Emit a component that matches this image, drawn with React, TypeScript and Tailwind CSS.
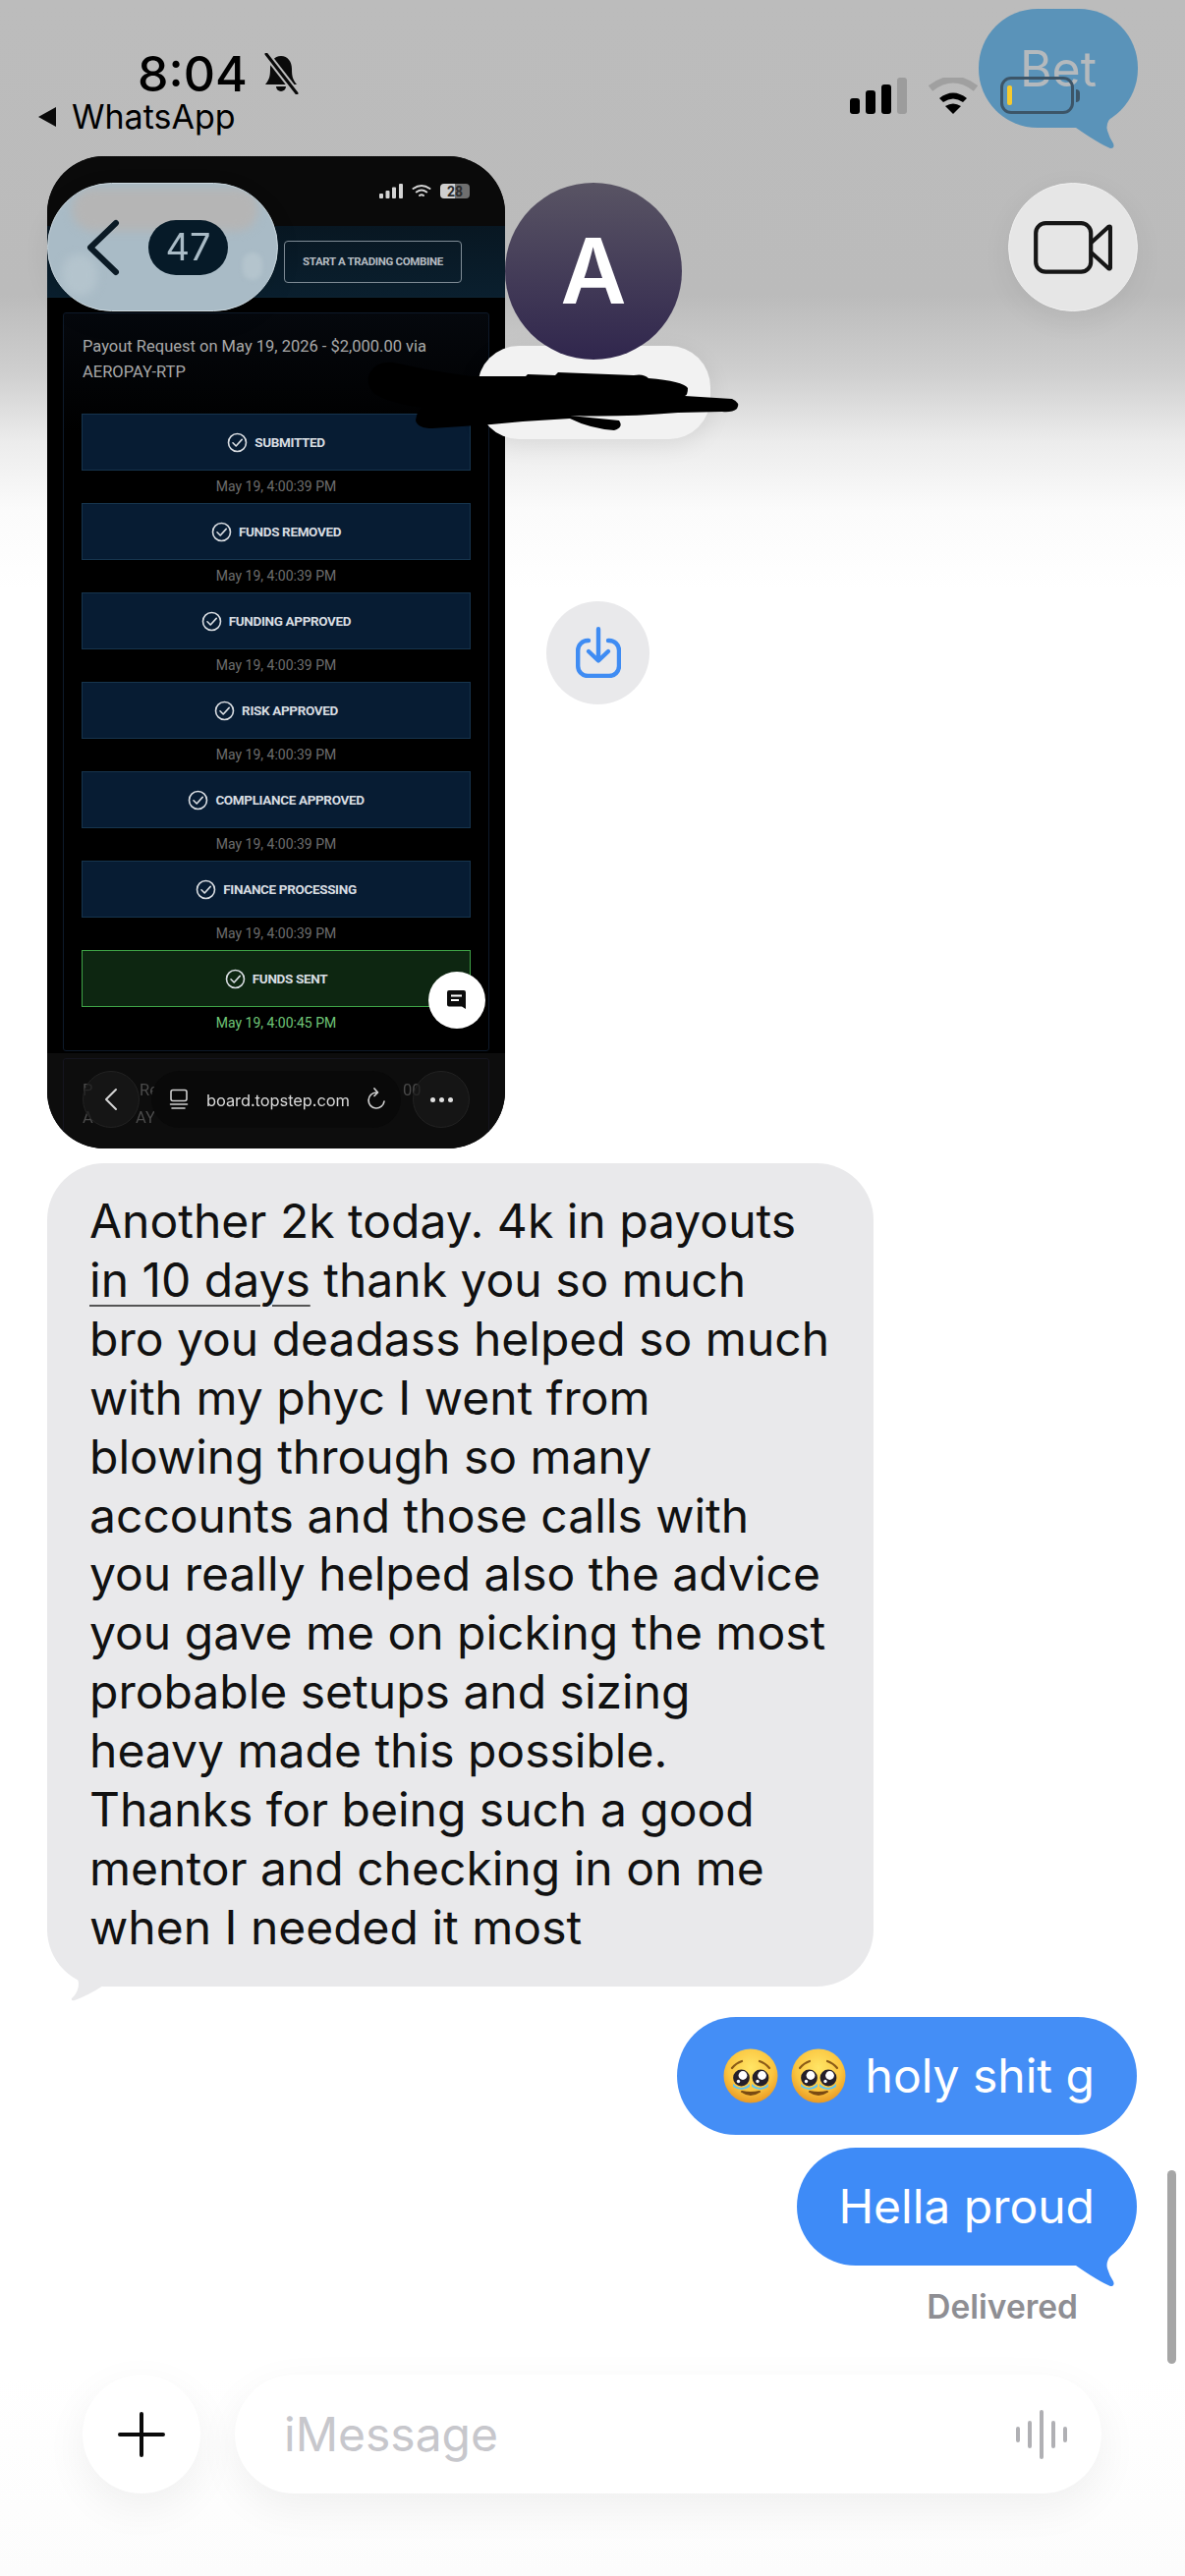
import React from "react";

const rows = [
  ["SUBMITTED", "May 19, 4:00:39 PM"],
  ["FUNDS REMOVED", "May 19, 4:00:39 PM"],
  ["FUNDING APPROVED", "May 19, 4:00:39 PM"],
  ["RISK APPROVED", "May 19, 4:00:39 PM"],
  ["COMPLIANCE APPROVED", "May 19, 4:00:39 PM"],
  ["FINANCE PROCESSING", "May 19, 4:00:39 PM"],
];

const lines = [
  "Another 2k today. 4k in payouts",
  "@in 10 days",
  "bro you deadass helped so much",
  "with my phyc I went from",
  "blowing through so many",
  "accounts and those calls with",
  "you really helped also the advice",
  "you gave me on picking the most",
  "probable setups and sizing",
  "heavy made this possible.",
  "Thanks for being such a good",
  "mentor and checking in on me",
  "when I needed it most",
];

function Check({ color = "#d9dde2" }: { color?: string }) {
  return (
    <svg width="21" height="21" viewBox="0 0 21 21" fill="none" className="shrink-0">
      <circle cx="10.5" cy="10.5" r="9" stroke={color} strokeWidth="1.6" />
      <path d="M6 10.8l3.2 3.2 6-6.6" stroke={color} strokeWidth="1.6" strokeLinecap="round" strokeLinejoin="round" />
    </svg>
  );
}

function Emoji() {
  return (
    <svg width="56" height="56" viewBox="0 0 56 56" className="shrink-0">
      <defs>
        <radialGradient id="face" cx="50%" cy="35%" r="70%">
          <stop offset="0%" stopColor="#ffe566" />
          <stop offset="60%" stopColor="#fbc53f" />
          <stop offset="100%" stopColor="#e5901f" />
        </radialGradient>
      </defs>
      <circle cx="28" cy="28" r="27.5" fill="url(#face)" />
      <path d="M9 20q4-5 10-7M47 20q-4-5-10-7" stroke="#8a5a17" strokeWidth="2.2" fill="none" strokeLinecap="round" />
      <path d="M10 36q8 8 17 0v3q-8 6-17 0zM29 36q9 8 17 0v3q-8 6-17 0z" fill="#63c4ee" />
      <circle cx="18.5" cy="30" r="8.4" fill="#241f2a" />
      <circle cx="38" cy="30" r="8.4" fill="#241f2a" />
      <circle cx="20" cy="27.5" r="4.4" fill="#fff" />
      <circle cx="39.5" cy="27.5" r="4.4" fill="#fff" />
      <circle cx="15.5" cy="33.5" r="1.7" fill="#fff" />
      <circle cx="35" cy="33.5" r="1.7" fill="#fff" />
      <path d="M19 44q9 6 18 0q-9 2-18 0z" fill="#7a4a12" stroke="#7a4a12" strokeWidth="2" strokeLinejoin="round" />
    </svg>
  );
}

export default function App() {
  return (
    <div
      className="relative h-[2622px] w-[1206px] overflow-hidden bg-[linear-gradient(to_bottom,#bcbcbc_0px,#bbbbbb_300px,#cfcfcf_380px,#ececec_450px,#fbfbfb_520px,#ffffff_600px)]"
      style={{ fontFamily: "Inter, 'Noto Sans', sans-serif" }}
    >
      {/* message column */}
      <main className="flex flex-col pl-[48px] pr-[49px] pt-[159px]">
        <div className="flex items-center">
          {/* screenshot attachment */}
          <div
            className="relative h-[1010px] w-[466px] shrink-0 overflow-hidden rounded-[58px] bg-black blur-[0.35px]"
            style={{ fontFamily: "Roboto, sans-serif" }}
          >
            <div className="flex h-[71px] items-start justify-end gap-[9px] bg-[#0a0a0a] pr-[36px] pt-[28px]">
              <svg width="24" height="15" viewBox="0 0 24 15" fill="#d4d4d4">
                <rect x="0" y="10" width="4" height="5" rx="1" />
                <rect x="6.5" y="7" width="4" height="8" rx="1" />
                <rect x="13" y="3.5" width="4" height="11.5" rx="1" />
                <rect x="20" y="0" width="4" height="15" rx="1" />
              </svg>
              <svg width="20" height="15" viewBox="0 0 20 15" fill="none" stroke="#d4d4d4" strokeWidth="2" strokeLinecap="round">
                <path d="M1.5 5q8.5-6 17 0M4.8 8.5q5.2-3.8 10.4 0M8 12q2-1.4 4 0" />
              </svg>
              <div className="flex h-[15px] w-[30px] items-center justify-center rounded-[4px] bg-[linear-gradient(to_right,#cfcfcf_50%,#6f6f6f_50%)] text-[14px] font-bold leading-none text-[#2b2b2b]">28</div>
            </div>
            <div className="flex h-[73px] justify-end border-b border-[#0e2433] bg-[linear-gradient(to_bottom,#081722,#0a1f2e)] pr-[44px] pt-[15px]">
              <div className="flex h-[43px] w-[181px] items-center justify-center rounded-[4px] border border-[#7f8c96] text-[11.5px] font-bold tracking-[-0.35px] text-[#b5bcc2]">
                START A TRADING COMBINE
              </div>
            </div>
            <div className="mx-[16px] mt-[15px] h-[752px] rounded-[3px] border border-[#0e1a2a] bg-[linear-gradient(to_bottom,#05080d,#000000_120px)]">
              <p className="px-[19px] pt-[21px] text-[16.5px] leading-[26px] text-[#a9a9a9]">
                Payout Request on May 19, 2026 - $2,000.00 via
                <br />
                AEROPAY-RTP
              </p>
              <div className="mt-[29px] flex flex-col px-[18px]">
                {rows.map(([label, time]) => (
                  <div key={label} className="flex flex-col">
                    <div className="flex h-[58px] items-center justify-center gap-[7px] border border-[#16344d] bg-[#071c33] text-[13.5px] font-bold tracking-[-0.35px] text-[#d8dde2]">
                      <Check />
                      <span>{label}</span>
                    </div>
                    <div className="flex h-[33px] items-center justify-center text-[14px] text-[#6d6d6d]">{time}</div>
                  </div>
                ))}
                <div className="flex h-[58px] items-center justify-center gap-[7px] border border-[#3fa447] bg-[#0d2611] text-[13.5px] font-bold tracking-[-0.35px] text-[#d8dde2]">
                  <Check />
                  <span>FUNDS SENT</span>
                </div>
                <div className="flex h-[33px] items-center justify-center text-[14px] text-[#6fc577]">May 19, 4:00:45 PM</div>
              </div>
            </div>

            {/* browser toolbar over the next page card */}
            <div className="absolute bottom-0 left-0 right-0 h-[97px] bg-[#0d0d0d]">
              <div className="absolute left-[16px] right-[16px] top-[5px] h-[100px] rounded-[3px] border border-[#15151f]" />
              <span className="absolute left-[36px] top-[25px] text-[16.5px] leading-[26px] text-[#4a4a4a]">P</span>
              <span className="absolute left-[94px] top-[25px] text-[16.5px] leading-[26px] text-[#4a4a4a]">Re</span>
              <span className="absolute left-[362px] top-[25px] text-[16.5px] leading-[26px] text-[#4a4a4a]">00</span>
              <span className="absolute left-[36px] top-[53px] text-[16.5px] leading-[26px] text-[#4a4a4a]">A</span>
              <span className="absolute left-[90px] top-[53px] text-[16.5px] leading-[26px] text-[#4a4a4a]">AY</span>
              <div className="absolute inset-x-0 top-[18px] flex items-center gap-[12px] pl-[36px]">
                <div className="flex h-[58px] w-[58px] items-center justify-center rounded-full border border-[#222] bg-[#1a1a1a]/70">
                  <svg width="16" height="24" viewBox="0 0 16 24" fill="none" stroke="#d5d5d5" strokeWidth="2" strokeLinecap="round" strokeLinejoin="round">
                    <path d="M13 2L3 12l10 10" />
                  </svg>
                </div>
                <div className="flex h-[58px] w-[254px] items-center rounded-full bg-[#090909] pl-[18px] text-[16.5px] tracking-[-0.1px] text-[#d9d9d9]" style={{ fontFamily: "Inter, sans-serif" }}>
                  <svg width="20" height="22" viewBox="0 0 20 22" fill="none" stroke="#cfcfcf" strokeWidth="1.6" strokeLinecap="round" className="shrink-0">
                    <rect x="2" y="1.5" width="16" height="11" rx="2" />
                    <path d="M1.5 16h17M3 20h13" />
                  </svg>
                  <span className="ml-[18px] w-[146px] shrink-0 whitespace-nowrap pt-[2px]">board.topstep.com</span>
                  <svg width="20" height="24" viewBox="0 0 20 24" fill="none" stroke="#cfcfcf" strokeWidth="1.7" strokeLinecap="round" strokeLinejoin="round" className="ml-[17px] shrink-0">
                    <path d="M10 5a8 8 0 1 0 8 9M8 1l3.5 4L8 8.5" />
                  </svg>
                </div>
                <div className="flex h-[58px] w-[58px] items-center justify-center gap-[4px] rounded-full border border-[#222] bg-[#1a1a1a]/70">
                  <span className="h-[5px] w-[5px] rounded-full bg-[#e0e0e0]" />
                  <span className="h-[5px] w-[5px] rounded-full bg-[#e0e0e0]" />
                  <span className="h-[5px] w-[5px] rounded-full bg-[#e0e0e0]" />
                </div>
              </div>
            </div>

            {/* floating chat button */}
            <div className="absolute left-[388px] top-[830px] flex h-[58px] w-[58px] items-center justify-center rounded-full bg-white">
              <svg width="24" height="24" viewBox="0 0 24 24">
                <path d="M4 2h15a2 2 0 0 1 2 2v17l-4-2.5H4a2 2 0 0 1-2-2V4a2 2 0 0 1 2-2z" fill="#0c0c0c" />
                <path d="M6 7.5h11M6 12h8" stroke="#fff" strokeWidth="2" />
              </svg>
            </div>
          </div>

          {/* save button */}
          <div className="ml-[42px] flex h-[105px] w-[105px] items-center justify-center rounded-full bg-[#e9e9eb]">
            <svg width="46" height="52" viewBox="0 0 46 52" fill="none" stroke="#3f8cf3" strokeWidth="4.4" strokeLinecap="round" strokeLinejoin="round">
              <path d="M13 14h-1A10 10 0 0 0 2.2 24v16A10 10 0 0 0 12 50h22a10 10 0 0 0 10-10V24a10 10 0 0 0-10-10h-1" />
              <path d="M23 2.2v32M13 25l10 9.5 10-9.5" />
            </svg>
          </div>
        </div>

        {/* received bubble */}
        <div className="relative mt-[15px] w-[841px] rounded-[58px] bg-[#e9e9eb] pb-[30px] pl-[43px] pt-[29px] text-[48px] leading-[59.9px] text-[#111]">
          {lines.map((l) =>
            l.startsWith("@") ? (
              <div key={l} className="whitespace-nowrap">
                <span className="underline decoration-[#555] decoration-[2px] underline-offset-[8px]">{l.slice(1)}</span> thank you so much
              </div>
            ) : (
              <div key={l} className="whitespace-nowrap">{l}</div>
            )
          )}
          <svg width="100" height="60" viewBox="48 1990 100 60" className="absolute bottom-[-22px] left-0" fill="#e9e9eb">
            <path d="M66 2003Q80 2015 80 2025Q80 2034 73 2040Q72 2043 76 2042Q95 2035 112 2022L112 2000Z" />
          </svg>
        </div>

        {/* sent bubbles */}
        <div className="mt-[31px] flex flex-col items-end">
          <div className="flex h-[120px] w-[468px] items-center justify-end gap-[13px] rounded-[60px] bg-[#448ef6] pr-[43px] text-[48px] text-white">
            <Emoji />
            <Emoji />
            <span className="ml-[7px]">holy shit g</span>
          </div>
          <div className="relative mt-[13px] flex h-[120px] w-[346px] items-center justify-end rounded-[60px] bg-[#3e8bf7] pr-[43px] text-[48px] text-white">
            Hella proud
            <svg width="72" height="60" viewBox="1085 2270 72 60" className="absolute left-[274px] top-[84px]" fill="#3e8bf7">
              <path d="M1095 2306L1085 2306L1085 2270L1150 2270Q1145 2285 1131 2295Q1125 2302 1127 2309Q1129 2316 1133 2322Q1135 2327 1130 2327Q1118 2322 1095 2306Z" />
            </svg>
          </div>
          <div className="mr-[60px] mt-[24px] text-[33.5px] font-semibold leading-[36px] text-[#8e8e93]">Delivered</div>
        </div>
      </main>

      {/* composer */}
      <div className="absolute bottom-0 left-0 right-0 flex h-[205px] items-start bg-[linear-gradient(to_bottom,#ffffff,#fcfcfc)] pl-[84px]">
        <div className="flex h-[121px] w-[120px] items-center justify-center rounded-full bg-white shadow-[0_14px_44px_rgba(0,0,0,0.06)]">
          <svg width="48" height="46" viewBox="0 0 48 46" stroke="#0a0a0a" strokeWidth="4" strokeLinecap="round">
            <path d="M24 2v42M2 23h44" />
          </svg>
        </div>
        <div className="ml-[35px] flex h-[121px] w-[882px] items-center justify-between rounded-full bg-white pl-[50px] pr-[34px] shadow-[0_14px_44px_rgba(0,0,0,0.06)]">
          <span className="text-[48px] text-[#c7c7cc]">iMessage</span>
          <svg width="54" height="50" viewBox="0 0 54 50" stroke="#b0b0b4" strokeWidth="4" strokeLinecap="round">
            <path d="M3 19v12M15 13v24M27 2v46M39 13v24M51 19v12" />
          </svg>
        </div>
      </div>

      {/* scrollbar */}
      <div className="absolute left-[1188px] top-[2209px] h-[197px] w-[9px] rounded-full bg-[#a6a6a6]" />

      {/* status bar */}
      <div className="absolute left-[140px] top-[50px] flex h-[50px] items-center text-[50px] font-medium leading-[50px] text-black">
        8:04
        <svg width="40" height="42" viewBox="0 0 36 42" className="ml-[14px]">
          <path d="M18 3c-7 0-11 6-11 13 0 8-1 11-5 16h32c-4-5-5-8-5-16 0-7-4-13-11-13z" fill="#0a0a0a" />
          <path d="M13 34a5 5 0 0 0 10 0z" fill="#0a0a0a" />
          <path d="M3 1l31 40" stroke="#bcbcbc" strokeWidth="7" />
          <path d="M3 1l31 40" stroke="#0a0a0a" strokeWidth="3" strokeLinecap="round" />
        </svg>
      </div>
      <div className="absolute left-[38px] top-[101px] flex items-center text-[34px] leading-[36px] text-black">
        <svg width="21" height="20" viewBox="0 0 19 20" fill="#0a0a0a" className="mr-[14px]">
          <path d="M18 0v20L0 10z" />
        </svg>
        WhatsApp
      </div>
      <div className="absolute left-[865px] top-[79px] flex items-end gap-[6px]">
        <span className="h-[16px] w-[10px] rounded-[3px] bg-black" />
        <span className="h-[24px] w-[10px] rounded-[3px] bg-black" />
        <span className="h-[30px] w-[10px] rounded-[3px] bg-black" />
        <span className="h-[37px] w-[10px] rounded-[3px] bg-[#9c9c9c]" />
      </div>
      <svg width="50" height="38" viewBox="0 0 50 38" className="absolute left-[945px] top-[79px]" fill="none">
        <path d="M2 11q23-18 46 0" stroke="#a0a0a0" strokeWidth="7" />
        <path d="M25 37l-8-8q8-5 16 0zM11 21q14-11 28 0l-4 4q-10-7-20 0z" fill="#000" />
      </svg>

      {/* Bet bubble seen through the bar */}
      <div className="absolute left-[996px] top-[9px] flex h-[121px] w-[162px] items-center justify-center rounded-[60px] bg-[#5a93b9] text-[50px] leading-none text-[#b4b9bd]">
        Bet
      </div>
      <svg width="72" height="60" viewBox="1085 2270 72 60" className="absolute left-[1085px] top-[94px]" fill="#5a93b9">
        <path d="M1095 2306L1085 2306L1085 2270L1150 2270Q1145 2285 1131 2295Q1125 2302 1127 2309Q1129 2316 1133 2322Q1135 2327 1130 2327Q1118 2322 1095 2306Z" />
      </svg>
      <div className="absolute left-[1018px] top-[78px] flex h-[38px] w-[75px] items-center rounded-[11px] border-[3px] border-[#3c5568] pl-[4px]">
        <span className="h-[20px] w-[5px] rounded-[2px] bg-[#f6ca2e]" />
      </div>
      <span className="absolute left-[1095px] top-[91px] h-[13px] w-[4px] rounded-r-full bg-[#3c5568]" />

      {/* glass back pill */}
      <div className="absolute left-[48px] top-[186px] flex h-[131px] w-[235px] items-center overflow-hidden rounded-full border border-[#cbd8df] bg-[#a9bbc6] pl-[38px] shadow-[0_8px_30px_rgba(0,0,0,0.06)]">
        <div className="absolute left-[24px] top-[4px] h-[44px] w-[190px] rounded-[22px] bg-[#b5b5b5] blur-[5px]" />
        <div className="absolute left-[14px] top-[72px] h-[42px] w-[36px] rounded-full bg-[#b4c4cd] blur-[4px]" />
        <div className="absolute left-[198px] top-[70px] h-[28px] w-[20px] rounded-full bg-[#b4c4cd] blur-[2px]" />
        <svg width="36" height="58" viewBox="0 0 36 58" fill="none" stroke="#0b1a25" strokeWidth="6" strokeLinecap="round" strokeLinejoin="round" className="relative">
          <path d="M31 4L5 29l26 25" />
        </svg>
        <div className="relative ml-[28px] flex h-[56px] w-[81px] items-center justify-center rounded-[28px] bg-[#061a28] text-[38px] text-[#a9bbc6]">47</div>
      </div>

      {/* avatar and name */}
      <div className="absolute left-[486px] top-[352px] h-[95px] w-[237px] rounded-[42px] bg-[#f2f2f2] shadow-[0_6px_24px_rgba(0,0,0,0.08)]" />
      <div className="absolute left-[514px] top-[186px] flex h-[180px] w-[180px] items-center justify-center rounded-full bg-[linear-gradient(to_bottom,#595464,#30264d)] text-[92px] font-semibold text-white">
        A
      </div>
      <svg width="400" height="120" viewBox="360 340 400 120" className="absolute left-[360px] top-[340px]" fill="#000">
        <path d="M376 380Q385 365 405 370Q440 378 480 383L535 383L537 381L565 382L568 379L645 382Q655 380 660 385Q695 388 700 395Q700 402 697 403L745 406Q754 410 750 416Q745 420 735 419L690 420Q630 425 580 423L630 428Q635 435 625 438Q600 436 580 426Q540 428 500 432L440 436Q425 436 423 428Q424 418 430 415Q395 410 380 400Q372 390 376 380Z" />
      </svg>

      {/* video button */}
      <div className="absolute left-[1026px] top-[186px] flex h-[131px] w-[132px] items-center justify-center rounded-full border border-[#f0f0f0] bg-[#e6e6e6] shadow-[0_8px_30px_rgba(0,0,0,0.06)]">
        <svg width="80" height="54" viewBox="0 0 80 54" fill="none" stroke="#161616" strokeWidth="4.2" strokeLinejoin="round">
          <rect x="2.2" y="2.2" width="56" height="49.5" rx="10" />
          <path d="M58.5 22L76 6q2-1 2 1v40q0 2-2 1L58.5 32" />
        </svg>
      </div>
    </div>
  );
}
